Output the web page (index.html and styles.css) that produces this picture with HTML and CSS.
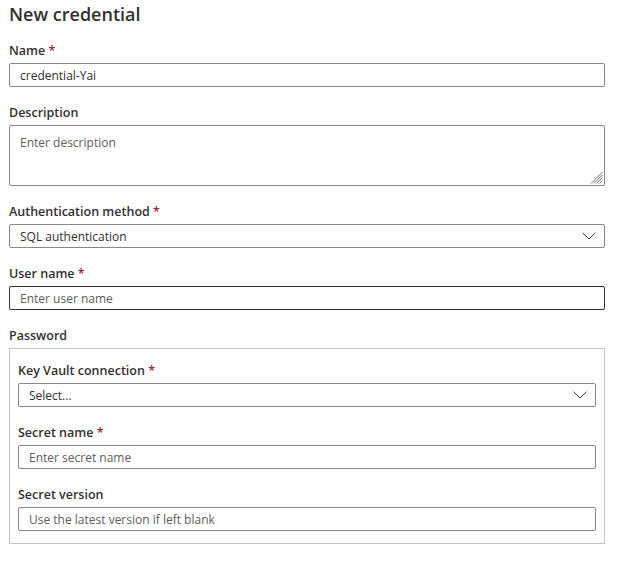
FILE: index.html
```html
<!DOCTYPE html>
<html lang="en">
<head>
<meta charset="utf-8">
<title>New credential</title>
<link rel="stylesheet" href="styles.css">
</head>
<body>
<div class="page">
  <h1 class="title">New credential</h1>

  <div class="field">
    <label class="label">Name <span class="req">*</span></label>
    <input class="control" type="text" value="credential-Yai">
  </div>

  <div class="field">
    <label class="label">Description</label>
    <div class="area-wrap">
      <textarea class="control area" placeholder="Enter description"></textarea>
      <svg class="grip" width="13" height="13" viewBox="0 0 13 13"><g stroke="#605e5c" stroke-width="0.9"><line x1="12.5" y1="1" x2="1" y2="12.5"/><line x1="12.5" y1="3.8" x2="3.8" y2="12.5"/><line x1="12.5" y1="6.6" x2="6.6" y2="12.5"/><line x1="12.5" y1="9.4" x2="9.4" y2="12.5"/></g></svg>
    </div>
  </div>

  <div class="field">
    <label class="label">Authentication method <span class="req">*</span></label>
    <div class="control select">
      <span class="value">SQL authentication</span>
      <svg class="chev" width="14" height="8" viewBox="0 0 14 8"><polyline points="0.5,0.8 7,7 13.5,0.8" fill="none" stroke="#323130" stroke-width="1"/></svg>
    </div>
  </div>

  <div class="field">
    <label class="label">User name <span class="req">*</span></label>
    <input class="control dark" type="text" placeholder="Enter user name">
  </div>

  <div class="field">
    <label class="label">Password</label>
    <div class="group">
      <div class="field">
        <label class="label">Key Vault connection <span class="req">*</span></label>
        <div class="control select">
          <span class="value">Select...</span>
          <svg class="chev" width="14" height="8" viewBox="0 0 14 8"><polyline points="0.5,0.8 7,7 13.5,0.8" fill="none" stroke="#323130" stroke-width="1"/></svg>
        </div>
      </div>
      <div class="field">
        <label class="label">Secret name <span class="req">*</span></label>
        <input class="control" type="text" placeholder="Enter secret name">
      </div>
      <div class="field">
        <label class="label">Secret version</label>
        <input class="control" type="text" placeholder="Use the latest version if left blank">
      </div>
    </div>
  </div>
</div>
</body>
</html>
```

FILE: styles.css
```css
* { box-sizing: border-box; }
html, body { margin: 0; padding: 0; background: #ffffff; }
body {
  font-family: "Open Sans", "Noto Sans", sans-serif;
  color: #323130;
}
.page {
  width: 596px;
  margin-left: 9px;
  padding-top: 5px;
  display: flex;
  flex-direction: column;
  gap: 17px;
}
.title {
  margin: 0;
  font-size: 18px;
  font-weight: 600;
  line-height: 20px;
  margin-top: -1px;
  margin-bottom: 1px;
}
.field {
  display: flex;
  flex-direction: column;
  gap: 3px;
}
.label {
  font-size: 12.5px;
  font-weight: 600;
  line-height: 18px;
  height: 18px;
}
.req { color: #a4262c; }
.control {
  display: block;
  height: 24px;
  width: 100%;
  border: 1px solid #8a8886;
  border-radius: 2px;
  background: #fff;
  font-family: inherit;
  font-size: 12px;
  color: #323130;
  padding: 0 10px;
  margin: 0;
  outline: none;
}
.control::placeholder { color: #605e5c; opacity: 1; }
.area-wrap { position: relative; }
.area {
  height: 61px;
  padding: 8px 10px;
  resize: none;
  line-height: 18px;
}
.grip {
  position: absolute;
  right: 2px;
  bottom: 2px;
  display: block;
}
.dark { border-color: #323130; }
.select {
  display: flex;
  align-items: center;
  justify-content: space-between;
  padding: 0 8px 0 10px;
}
.chev { display: block; }
.group {
  border: 1px solid #c8c6c4;
  padding: 13px 8px 12px 8px;
  display: flex;
  flex-direction: column;
  gap: 17px;
}
```
